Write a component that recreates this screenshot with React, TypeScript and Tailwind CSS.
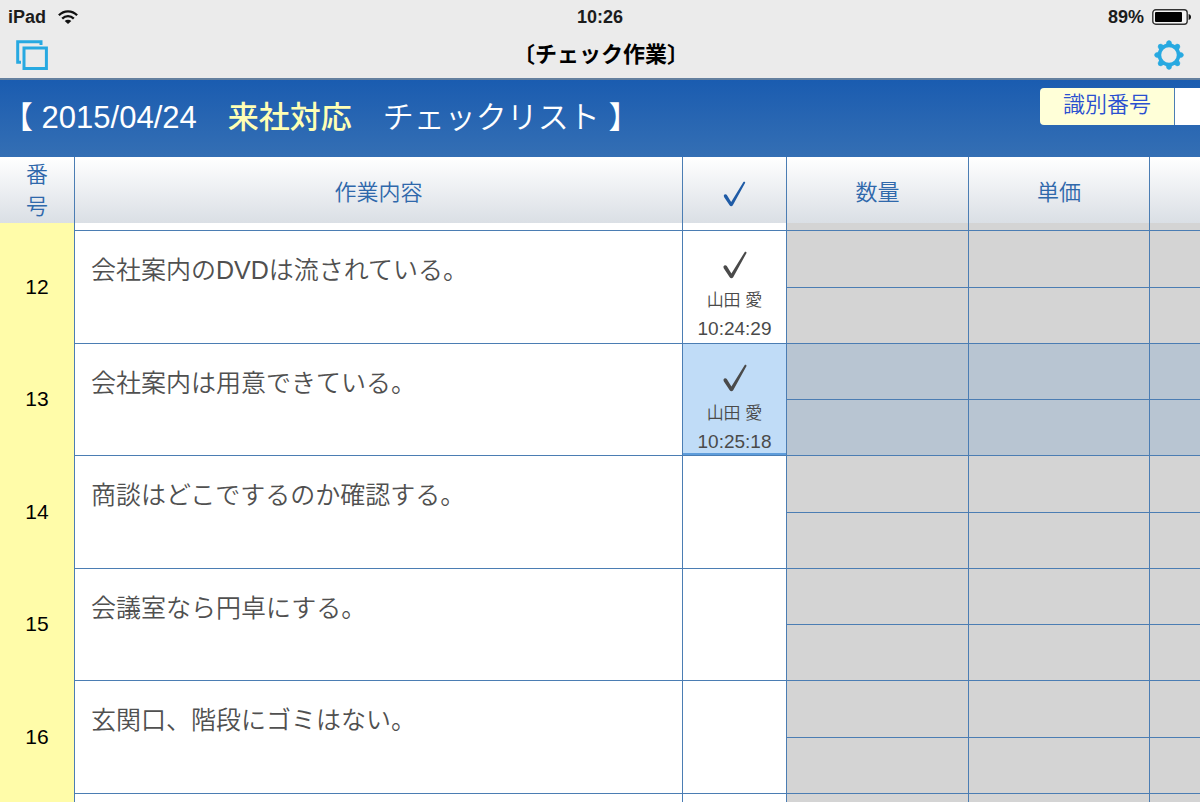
import { Fragment, useState } from "react";

type Item = {
  no: number;
  text: string;
  by?: string;
  time?: string;
};

const items: Item[] = [
  { no: 12, text: "会社案内のDVDは流されている。", by: "山田 愛", time: "10:24:29" },
  { no: 13, text: "会社案内は用意できている。", by: "山田 愛", time: "10:25:18" },
  { no: 14, text: "商談はどこでするのか確認する。" },
  { no: 15, text: "会議室なら円卓にする。" },
  { no: 16, text: "玄関口、階段にゴミはない。" },
];

function WifiIcon() {
  return (
    <svg viewBox="0 0 20 14" className="h-[14px] w-5" fill="none" stroke="#111" strokeWidth="2.3" aria-hidden="true">
      <path d="M0.9 5.2C6 0 14 0 19.1 5.2" />
      <path d="M4.2 8.6c3.3-3.3 8.3-3.3 11.6 0" />
      <path d="M10 14 6.700 10.900c1.900-1.700 4.700-1.700 6.600 0z" fill="#111" stroke="none" />
    </svg>
  );
}

function BatteryIcon() {
  return (
    <svg viewBox="0 0 40 16" className="h-4 w-10" aria-hidden="true">
      <rect x="0.8" y="0.8" width="34.4" height="14.4" rx="3" fill="#f4f4f4" stroke="#333" strokeWidth="1.4" />
      <rect x="3" y="3" width="27" height="10" rx="1" fill="#000" />
      <path d="M36.6 5v6c1.6-.4 2.4-1.400 2.400-3s-.8-2.600-2.400-3z" fill="#111" />
    </svg>
  );
}

function WindowsIcon() {
  return (
    <svg viewBox="0 0 32 30" className="h-[30px] w-8" fill="none" stroke="#27a9e1" strokeWidth="3" aria-hidden="true">
      <path d="M25 5V1.700H1.700V22.300H5" />
      <rect x="8" y="8" width="22.400" height="20.500" />
    </svg>
  );
}

function GearIcon() {
  return (
    <svg viewBox="-15 -15 30 30" className="size-[30px]" fill="none" stroke="#27a9e1" aria-hidden="true">
      <circle r="9.600" strokeWidth="3.600" />
      {[0, 45, 90, 135, 180, 225, 270, 315].map((a) => (
        <path key={a} d="M-3 -10.200L-2.100 -13.400Q0 -15.600 2.100 -13.400L3 -10.200z" fill="#27a9e1" strokeWidth="0.500" transform={`rotate(${a})`} />
      ))}
    </svg>
  );
}

function CheckIcon({ className }: { className: string }) {
  return (
    <svg viewBox="0 0 24 28" className={className} fill="currentColor" aria-hidden="true">
      <path d="M0.600 15.200C1.200 14 3 13.800 3.800 15L8.400 22.600L21.600 1.200C22.200 .3 24 .9 23.400 2.200L10.200 26.200C9.300 27.700 7.600 27.700 6.700 26.200L.9 17.400C.5 16.700.3 15.900.6 15.200z" />
    </svg>
  );
}

const line = "border-[#4b7db3]";

export default function App() {
  const [selected] = useState(13);
  const headCell = `border-l ${line} bg-linear-to-b from-white to-[#dadfe5] px-0 pb-0 text-[22px] font-[350] text-[#2f68ab]`;

  return (
    <div className="flex h-screen flex-col overflow-hidden bg-white font-['Liberation_Sans','Noto_Sans_CJK_JP',sans-serif]">
      <header className="border-b-2 border-[#64809f] bg-[#ebebeb] text-black">
        <div className="grid h-8 grid-cols-3 items-center px-2 pt-[2px] text-lg leading-7 font-bold text-[#1c1c1c]">
          <div className="flex items-center gap-3">
            <span>iPad</span>
            <WifiIcon />
          </div>
          <div className="text-center">10:26</div>
          <div className="flex items-center justify-end gap-2">
            <span>89%</span>
            <BatteryIcon />
          </div>
        </div>
        <div className="flex h-[46px] items-center justify-between px-4">
          <button type="button" aria-label="一覧">
            <WindowsIcon />
          </button>
          <h1 className="text-[22px] leading-8 font-bold">〔チェック作業〕</h1>
          <button type="button" aria-label="設定">
            <GearIcon />
          </button>
        </div>
      </header>

      <section className="flex h-[77px] shrink-0 items-start justify-between bg-linear-to-b from-[#1a5cb0] to-[#346fb4] pt-2">
        <h2 className="pt-2 pl-[2px] text-[31px] leading-[44px] font-[350] whitespace-pre text-white">
          【 2015/04/24　<strong className="font-medium text-[#ffffb4]">来社対応</strong>　チェックリスト 】
        </h2>
        <div className="flex h-[37px] w-40 overflow-hidden rounded-l-sm">
          <label htmlFor="ident" className="flex w-[134px] shrink-0 items-center justify-center bg-[#ffffd8] pb-1 text-[22px] font-[350] text-[#2a50d0]">
            識別番号
          </label>
          <input id="ident" type="text" className={`min-w-0 flex-1 border-l ${line} bg-white`} />
        </div>
      </section>

      <main className="min-h-0 flex-1 overflow-hidden">
        <table className="w-full table-fixed border-separate border-spacing-0">
          <colgroup>
            <col className="w-[74px]" />
            <col />
            <col className="w-[104px]" />
            <col className="w-[182px]" />
            <col className="w-[181px]" />
            <col className="w-[51px]" />
          </colgroup>
          <thead>
            <tr className="h-[66px]">
              <th className="bg-linear-to-b from-white to-[#dadfe5] px-0 pt-[2px] pb-0 text-[22px] leading-8 font-[350] text-[#2f68ab]">
                番<br />号
              </th>
              <th className={`${headCell} pt-1`}>作業内容</th>
              <th className={`${headCell} pt-1`} aria-label="チェック">
                <CheckIcon className="mx-auto mt-1 h-[26px] w-[23px] text-[#1f5ba6]" />
              </th>
              <th className={`${headCell} pt-1`}>数量</th>
              <th className={`${headCell} pt-1`}>単価</th>
              <th className={`${headCell} pt-1`} />
            </tr>
          </thead>
          <tbody>
            <tr className="h-[7px]">
              <td className="bg-[#fffca9] p-0" />
              <td className={`border-l p-0 ${line}`} />
              <td className={`border-l p-0 ${line}`} />
              <td className={`border-l bg-[#d4d4d4] p-0 ${line}`} />
              <td className={`border-l bg-[#d4d4d4] p-0 ${line}`} />
              <td className={`border-l bg-[#d4d4d4] p-0 ${line}`} />
            </tr>
            {items.map((item, i) => {
              const on = item.no === selected;
              const amount = `border-t border-l p-0 ${line} ${on ? "bg-[#b8c5d2]" : "bg-[#d4d4d4]"}`;
              return (
                <Fragment key={item.no}>
                  <tr className={i % 2 === 0 ? "h-[57px]" : "h-[56px]"}>
                    <th rowSpan={2} scope="row" className="bg-[#fffca9] p-0 text-[21px] font-normal text-black">
                      {item.no}
                    </th>
                    <td rowSpan={2} className={`border-t border-l px-4 pt-[21px] pb-0 align-top text-[25px] leading-9 font-[350] text-[#505050] ${line}`}>
                      {item.text}
                    </td>
                    <td rowSpan={2} className={`border-t border-l p-0 align-top ${line} ${on ? "bg-[#c0dcf7] shadow-[inset_0_-2px_0_#5f9ddb]" : ""}`}>
                      <label className="flex h-[111px] flex-col items-center pt-5 text-[#4a4a4a]">
                        <input type="checkbox" defaultChecked={Boolean(item.time)} aria-label={`${item.no} チェック`} className="sr-only" />
                        {item.time && (
                          <>
                            <CheckIcon className="h-7 w-6 shrink-0" />
                            <span className="mt-[10px] text-[17px] leading-6 font-[350]">{item.by}</span>
                            <span className="mt-1 text-[19px] leading-6">{item.time}</span>
                          </>
                        )}
                      </label>
                    </td>
                    <td className={amount} />
                    <td className={amount} />
                    <td className={amount} />
                  </tr>
                  <tr className="h-[56px]">
                    <td className={amount} />
                    <td className={amount} />
                    <td className={amount} />
                  </tr>
                </Fragment>
              );
            })}
            <tr className="h-14">
              <td className="bg-[#fffca9] p-0" />
              <td className={`border-t border-l p-0 ${line}`} />
              <td className={`border-t border-l p-0 ${line}`} />
              <td className={`border-t border-l bg-[#d4d4d4] p-0 ${line}`} />
              <td className={`border-t border-l bg-[#d4d4d4] p-0 ${line}`} />
              <td className={`border-t border-l bg-[#d4d4d4] p-0 ${line}`} />
            </tr>
          </tbody>
        </table>
      </main>
    </div>
  );
}
